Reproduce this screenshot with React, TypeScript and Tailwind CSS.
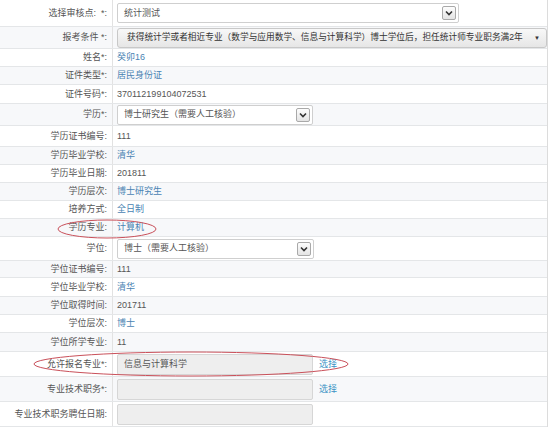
import React from 'react';

type Row = {
  label: string;
  h: string;
  kind: 'text' | 'select' | 'button' | 'input';
  value?: string;
  tone?: 'blue' | 'gray';
  width?: string;
  link?: boolean;
};

const rows: Row[] = [
  { label: '选择审核点:  *:', h: 'h-[27px]', kind: 'select', value: '统计测试', width: 'w-[342px]' },
  { label: '报考条件 *:', h: 'h-[22px]', kind: 'button', value: '获得统计学或者相近专业（数学与应用数学、信息与计算科学）博士学位后，担任统计师专业职务满2年' },
  { label: '姓名*:', h: 'h-[18px]', kind: 'text', value: '癸卯16', tone: 'blue' },
  { label: '证件类型*:', h: 'h-[18px]', kind: 'text', value: '居民身份证', tone: 'blue' },
  { label: '证件号码*:', h: 'h-[19px]', kind: 'text', value: '370112199104072531', tone: 'gray' },
  { label: '学历*:', h: 'h-[22px]', kind: 'select', value: '博士研究生（需要人工核验）', width: 'w-[196px]' },
  { label: '学历证书编号:', h: 'h-[21px]', kind: 'text', value: '111', tone: 'gray' },
  { label: '学历毕业学校:', h: 'h-[18px]', kind: 'text', value: '清华', tone: 'blue' },
  { label: '学历毕业日期:', h: 'h-[18px]', kind: 'text', value: '201811', tone: 'gray' },
  { label: '学历层次:', h: 'h-[18px]', kind: 'text', value: '博士研究生', tone: 'blue' },
  { label: '培养方式:', h: 'h-[18px]', kind: 'text', value: '全日制', tone: 'blue' },
  { label: '学历专业:', h: 'h-[18px]', kind: 'text', value: '计算机', tone: 'blue' },
  { label: '学位:', h: 'h-[24px]', kind: 'select', value: '博士（需要人工核验）', width: 'w-[197px]' },
  { label: '学位证书编号:', h: 'h-[17px]', kind: 'text', value: '111', tone: 'gray' },
  { label: '学位毕业学校:', h: 'h-[19px]', kind: 'text', value: '清华', tone: 'blue' },
  { label: '学位取得时间:', h: 'h-[18px]', kind: 'text', value: '201711', tone: 'gray' },
  { label: '学位层次:', h: 'h-[18px]', kind: 'text', value: '博士', tone: 'blue' },
  { label: '学位所学专业:', h: 'h-[19px]', kind: 'text', value: '11', tone: 'gray' },
  { label: '允许报名专业*:', h: 'h-[25px]', kind: 'input', value: '信息与计算科学', link: true },
  { label: '专业技术职务*:', h: 'h-[25px]', kind: 'input', link: true },
  { label: '专业技术职务聘任日期:', h: 'h-[25px]', kind: 'input' },
];

const Arrow = () => (
  <span className="flex h-[14px] w-[14px] items-center justify-center rounded-[2px] border border-[#a9a9a9] bg-gradient-to-b from-[#fdfdfd] to-[#e4e4e4]">
    <svg width="8" height="6" viewBox="0 0 8 6">
      <path d="M1 1.5 L4 4.5 L7 1.5" fill="none" stroke="#333" strokeWidth="1.6" />
    </svg>
  </span>
);

const Value = ({ row }: { row: Row }) => {
  if (row.kind === 'select') {
    return (
      <div className={`${row.width} flex h-[20px] items-center justify-between rounded-[2px] border border-[#cfcfcf] bg-white pl-[6px] pr-[2px] text-[#555]`}>
        <span>{row.value}</span>
        <Arrow />
      </div>
    );
  }
  if (row.kind === 'button') {
    return (
      <div className="flex h-[20px] w-[431px] items-center justify-between rounded-[3px] border border-[#c8c8c8] bg-gradient-to-b from-[#f8f8f8] to-[#e6e6e6] pl-[9px] pr-[6px] text-[8.7px] text-[#333]">
        <span className="whitespace-nowrap">{row.value}</span>
        <span className="text-[6px] text-[#333]">▼</span>
      </div>
    );
  }
  if (row.kind === 'input') {
    return (
      <div className="flex items-center gap-[6px]">
        <div className="flex h-[21px] w-[196px] items-center rounded-[2px] border border-[#d6d6d6] bg-[#eeeeee] pl-[6px] text-[#555]">
          {row.value}
        </div>
        {row.link && <span className="text-[#3a93c4]">选择</span>}
      </div>
    );
  }
  return <span className={row.tone === 'blue' ? 'text-[#4a83b3]' : 'text-[#555]'}>{row.value}</span>;
};

export default function App() {
  return (
    <div className="relative h-[430px] w-[554px] overflow-hidden bg-white text-[9px] leading-none" style={{ fontFamily: '"Liberation Sans", "Noto Sans CJK SC", sans-serif' }}>
      <div className="w-[548px] border-r border-[#dcdcdc]">
        {rows.map((row, i) => (
          <div key={i} className={`flex ${row.h} border-b border-[#e4e6e8] ${i % 2 === 1 ? 'bg-[#f7f8fa]' : 'bg-white'}`}>
            <div className="flex w-[113px] shrink-0 items-center justify-end whitespace-pre border-r border-[#e2e2e2] pr-[5px] text-[#555]">
              {row.label}
            </div>
            <div className="flex min-w-0 flex-1 items-center pl-[4px]">
              <Value row={row} />
            </div>
          </div>
        ))}
      </div>

      {/* red annotation ellipses */}
      <svg className="pointer-events-none absolute left-0 top-0" width="554" height="430">
        <ellipse cx="107" cy="229" rx="49" ry="9" fill="none" stroke="#c9505a" strokeWidth="1" />
        <ellipse cx="191" cy="364" rx="157" ry="12" fill="none" stroke="#c9505a" strokeWidth="1" />
      </svg>
    </div>
  );
}
